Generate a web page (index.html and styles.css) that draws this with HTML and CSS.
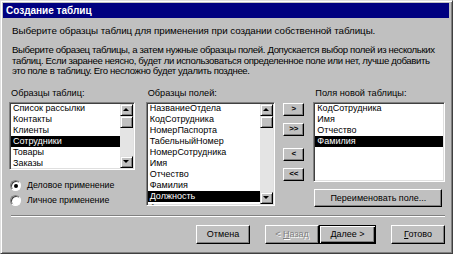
FILE: index.html
```html
<!DOCTYPE html>
<html lang="ru">
<head>
    <meta charset="UTF-8">
    <title>Создание таблиц</title>
    <link rel="stylesheet" href="styles.css">
</head>
<body>
    <div class="window">
        <div class="titlebar">Создание таблиц</div>
        <div class="content">
            <p class="intro">Выберите образцы таблиц для применения при создании собственной таблицы.</p>
            <p class="desc">Выберите образец таблицы, а затем нужные образцы полей. Допускается выбор полей из нескольких<br>таблиц. Если заранее неясно, будет ли использоваться определенное поле или нет, лучше добавить<br>это поле в таблицу. Его несложно будет удалить позднее.</p>

            <div class="lists">
                <div class="col col-tables">
                    <div class="label">Образцы таблиц:</div>
                    <div class="listbox lb-tables">
                        <ul class="items">
                            <li>Список рассылки</li>
                            <li>Контакты</li>
                            <li>Клиенты</li>
                            <li class="sel">Сотрудники</li>
                            <li>Товары</li>
                            <li>Заказы</li>
                        </ul>
                        <div class="scrollbar">
                            <span class="sbtn up"></span>
                            <span class="thumb"></span>
                            <span class="track"></span>
                            <span class="sbtn down"></span>
                        </div>
                    </div>
                    <div class="radios">
                        <label class="radio"><span class="dot checked"></span>Деловое применение</label>
                        <label class="radio"><span class="dot"></span>Личное применение</label>
                    </div>
                </div>

                <div class="col col-fields">
                    <div class="label">Образцы полей:</div>
                    <div class="listbox lb-fields">
                        <ul class="items">
                            <li>НазваниеОтдела</li>
                            <li>КодСотрудника</li>
                            <li>НомерПаспорта</li>
                            <li>ТабельныйНомер</li>
                            <li>НомерСотрудника</li>
                            <li>Имя</li>
                            <li>Отчество</li>
                            <li>Фамилия</li>
                            <li class="sel">Должность</li>
                            <li>Адрес</li>
                        </ul>
                        <div class="scrollbar">
                            <span class="sbtn up"></span>
                            <span class="thumb"></span>
                            <span class="track"></span>
                            <span class="sbtn down"></span>
                        </div>
                    </div>
                </div>

                <div class="col col-move">
                    <button class="btn small">&gt;</button>
                    <button class="btn small">&gt;&gt;</button>
                    <button class="btn small gap">&lt;</button>
                    <button class="btn small">&lt;&lt;</button>
                </div>

                <div class="col col-new">
                    <div class="label">Поля новой таблицы:</div>
                    <div class="listbox lb-new">
                        <ul class="items">
                            <li>КодСотрудника</li>
                            <li>Имя</li>
                            <li>Отчество</li>
                            <li class="sel">Фамилия</li>
                        </ul>
                    </div>
                    <button class="btn rename">Переименовать поле...</button>
                </div>
            </div>

            <div class="separator"></div>

            <div class="footer">
                <button class="btn">Отмена</button>
                <button class="btn disabled back">&lt; <u>Н</u>азад</button>
                <button class="btn default"><u>Д</u>алее &gt;</button>
                <button class="btn last"><u>Г</u>отово</button>
            </div>
        </div>
    </div>
</body>
</html>
```

FILE: styles.css
```css
*{
    margin: 0;
    padding: 0;
    box-sizing: border-box;
}
html,body{
    width: 453px;
    height: 254px;
    overflow: hidden;
    background: #c0c0c0;
}
body{
    font-family: "Liberation Sans", Arial, sans-serif;
    font-size: 9.6px;
    color: #000;
}
ul{
    list-style: none;
}
.window{
    width: 453px;
    height: 254px;
    border: 1px solid;
    border-color: #dfdfdf #404040 #404040 #dfdfdf;
    box-shadow: inset 1px 1px #fff, inset -1px -1px #808080;
    padding: 2px;
    display: flex;
    flex-direction: column;
}
.titlebar{
    height: 15px;
    margin-right: 1px;
    background: #000080;
    color: #fff;
    font-weight: bold;
    font-size: 10px;
    line-height: 15px;
    padding-left: 3px;
}
.content{
    padding: 7px 5px 0 6px;
    flex: 1;
}
.intro{
    font-size: 9.8px;
    letter-spacing: -0.06px;
    line-height: 12px;
    padding-left: 3px;
}
.desc{
    margin-top: 8px;
    line-height: 10.5px;
    padding-left: 3px;
    letter-spacing: -0.36px;
    white-space: nowrap;
}
.lists{
    display: flex;
    margin-top: 10px;
}
.label{
    font-size: 9.2px;
    line-height: 13px;
    height: 15px;
    padding-left: 2px;
}
.col-tables{
    width: 126px;
}
.col-fields{
    width: 130px;
    margin-left: 11px;
}
.col-move{
    width: 21px;
    margin-left: 8px;
    padding-top: 16px;
    display: flex;
    flex-direction: column;
}
.col-new{
    width: 132px;
    margin-left: 9px;
}
.listbox{
    background: #fff;
    border: 1px solid;
    border-color: #808080 #fff #fff #808080;
    box-shadow: inset 1px 1px #404040, inset -1px -1px #dfdfdf;
    display: flex;
    overflow: hidden;
    padding: 0 1px 0 1px;
    font-size: 9px;
}
.lb-tables{
    height: 68px;
}
.lb-fields{
    height: 104px;
}
.lb-new{
    height: 80px;
}
.items{
    flex: 1;
    overflow: hidden;
}
.items li{
    line-height: 11px;
    padding-left: 2px;
    white-space: nowrap;
}
.items li.sel{
    background: #000;
    color: #fff;
}
.scrollbar{
    width: 13px;
    display: flex;
    flex-direction: column;
    margin: 1px 0 1px 0;
}
.sbtn,.thumb{
    display: block;
    background: #c0c0c0;
    border: 1px solid;
    border-color: #dfdfdf #000 #000 #dfdfdf;
    box-shadow: inset 1px 1px #fff, inset -1px -1px #808080;
    position: relative;
}
.sbtn{
    height: 12px;
}
.thumb{
    height: 12px;
}
.track{
    flex: 1;
    background: #e4e4e4;
}
.sbtn::after{
    content: "";
    position: absolute;
    left: 2px;
    top: 3px;
    border-left: 3px solid transparent;
    border-right: 3px solid transparent;
}
.sbtn.up::after{
    border-bottom: 3px solid #000;
}
.sbtn.down::after{
    border-top: 3px solid #000;
}
.radios{
    margin-top: 8px;
    padding-left: 1px;
    font-size: 8.8px;
}
.radio{
    display: flex;
    align-items: center;
    height: 15px;
}
.dot{
    width: 11px;
    height: 11px;
    border-radius: 50%;
    border: 1px solid;
    border-color: #808080 #fff #fff #808080;
    box-shadow: inset 1px 1px #404040;
    background: #fff;
    margin-right: 6px;
    position: relative;
}
.dot.checked::after{
    content: "";
    position: absolute;
    left: 3px;
    top: 3px;
    width: 4px;
    height: 4px;
    border-radius: 50%;
    background: #000;
}
.btn{
    font-family: "Liberation Sans", Arial, sans-serif;
    font-size: 9px;
    color: #000;
    background: #c0c0c0;
    border: 1px solid;
    border-color: #fff #000 #000 #fff;
    box-shadow: inset -1px -1px #808080;
    height: 19px;
    width: 54px;
}
.btn.small{
    width: 21px;
    height: 13px;
    margin-bottom: 7px;
    font-size: 8px;
    font-weight: bold;
    line-height: 10px;
}
.btn.small.gap{
    margin-top: 5px;
}
.btn.rename{
    width: 128px;
    height: 18px;
    margin: 7px 0 0 1px;
}
.separator{
    height: 2px;
    border-top: 1px solid #808080;
    border-bottom: 1px solid #fff;
    margin: 7px 0 8px 2px;
}
.footer{
    display: flex;
    justify-content: flex-end;
}
.footer .btn{
    margin-left: 15px;
}
.footer .btn.default{
    margin-left: 0;
    width: 57px;
    border: 1px solid #000;
    box-shadow: inset 1px 1px #fff, inset -1px -1px #000, inset -2px -2px #808080;
}
.btn.disabled{
    color: #808080;
    text-shadow: 1px 1px #fff;
}
```
